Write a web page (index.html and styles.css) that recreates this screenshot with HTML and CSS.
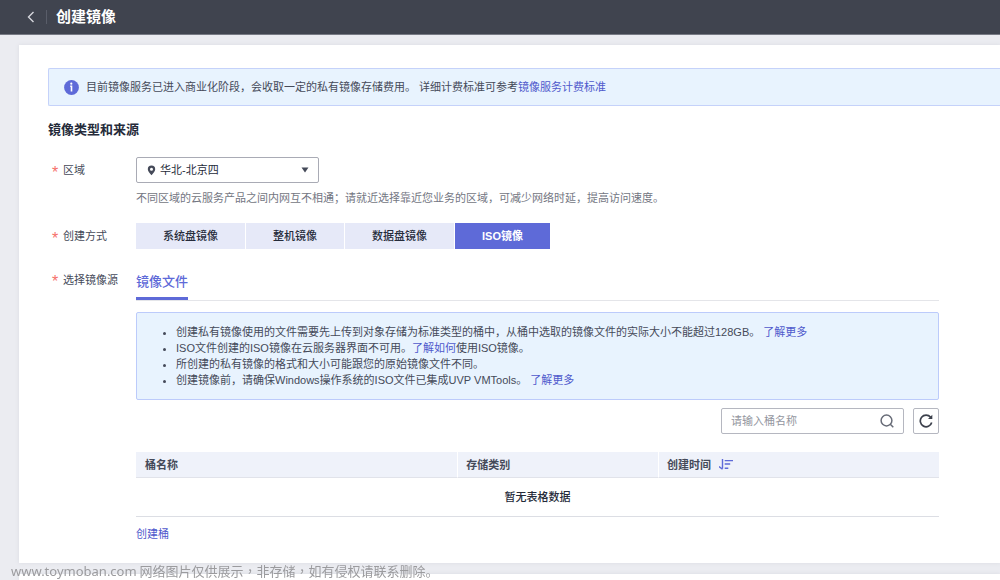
FILE: index.html
```
<!DOCTYPE html>
<html lang="zh-CN">
<head>
<meta charset="utf-8">
<meta name="viewport" content="width=device-width, initial-scale=1">
<title>创建镜像</title>
<link rel="stylesheet" href="styles.css">
</head>
<body>
<header class="topbar">
  <button class="back" type="button" aria-label="返回">
    <svg width="8" height="12" viewBox="0 0 8 12"><path d="M6.5 1 1.5 6l5 5" fill="none" stroke="currentColor" stroke-width="1.4"/></svg>
  </button>
  <h1 class="page-title">创建镜像</h1>
</header>

<main class="content">
  <section class="card">
    <div class="notice">
      <svg class="notice-icon" width="15" height="15" viewBox="0 0 15 15"><circle cx="7.5" cy="7.5" r="7.4" fill="#5e6ad8"/><circle cx="7.3" cy="3.7" r="1.1" fill="#fff"/><path d="M6.2 6.3h1.300v5.200" fill="none" stroke="#fff" stroke-width="1.6"/></svg>
      <p class="notice-text">目前镜像服务已进入商业化阶段，会收取一定的私有镜像存储费用。 详细计费标准可参考<a class="link" href="#pricing">镜像服务计费标准</a></p>
    </div>

    <h2 class="section-title">镜像类型和来源</h2>

    <form class="form">
      <div class="row">
        <label class="label" for="region"><span class="star">*</span>区域</label>
        <div class="field">
          <div class="select-box">
            <svg class="pin" width="9" height="11" viewBox="0 0 9 11"><path fill-rule="evenodd" d="M4.5 0.5a3.7 3.7 0 0 1 3.7 3.7c0 2.2-2 4.1-3.7 6.1C2.8 8.3 0.8 6.4 0.8 4.2A3.7 3.7 0 0 1 4.5 0.5Zm0 2.200a1.500 1.500 0 1 0 0 3 1.500 1.500 0 0 0 0-3Z" fill="#454a59"/></svg>
            <select class="select" id="region"><option>华北-北京四</option></select>
            <svg class="caret" width="8" height="6" viewBox="0 0 8 6"><path d="M.5.5h7L4 5.500Z" fill="#454a59"/></svg>
          </div>
          <p class="hint">不同区域的云服务产品之间内网互不相通；请就近选择靠近您业务的区域，可减少网络时延，提高访问速度。</p>
        </div>
      </div>

      <div class="row">
        <span class="label" id="mode"><span class="star">*</span>创建方式</span>
        <div class="segments" role="group" aria-labelledby="mode">
          <button class="segment" type="button">系统盘镜像</button>
          <button class="segment" type="button">整机镜像</button>
          <button class="segment" type="button">数据盘镜像</button>
          <button class="segment segment-active" type="button" aria-pressed="true">ISO镜像</button>
        </div>
      </div>

      <div class="row">
        <span class="label label-source"><span class="star">*</span>选择镜像源</span>
        <div class="field">
          <div class="tabs" role="tablist"><button class="tab" type="button" role="tab" aria-selected="true">镜像文件</button></div>
          <ul class="tips">
            <li>创建私有镜像使用的文件需要先上传到对象存储为标准类型的桶中，从桶中选取的镜像文件的实际大小不能超过128GB。 <a class="link" href="#bucket">了解更多</a></li>
            <li>ISO文件创建的ISO镜像在云服务器界面不可用。<a class="link" href="#iso">了解如何</a>使用ISO镜像。</li>
            <li>所创建的私有镜像的格式和大小可能跟您的原始镜像文件不同。</li>
            <li>创建镜像前，请确保Windows操作系统的ISO文件已集成UVP VMTools。 <a class="link" href="#tools">了解更多</a></li>
          </ul>
          <div class="toolbar">
            <div class="search">
              <input class="search-input" type="text" placeholder="请输入桶名称" aria-label="桶名称">
              <button class="search-button" type="button" aria-label="搜索"><svg width="14" height="14" viewBox="0 0 14 14"><g fill="none" stroke="#686c78" stroke-width="1.5"><circle cx="6.500" cy="6.500" r="5.400"/><path d="m10.300 10.300 3 3"/></g></svg></button>
            </div>
            <button class="refresh" type="button" aria-label="刷新"><svg width="14" height="14" viewBox="0 0 14 14"><path d="M11.600 3.300A5.800 5.800 0 1 0 12.700 8.500" fill="none" stroke="#3c404c" stroke-width="1.700"/><path d="M13.300.8v4.300H9Z" fill="#3c404c"/></svg></button>
          </div>
          <table class="table">
            <thead>
              <tr>
                <th class="col-name">桶名称</th>
                <th class="col-type">存储类别</th>
                <th><span class="sortable">创建时间<button class="sort" type="button" aria-label="排序"><svg width="14" height="11" viewBox="0 0 14 11"><path d="M3.500 0v9.500M0 7.600l3.500 2.600M5.700 1.600H14M5.700 5h5.500M5.700 9.300h3.600" fill="none" stroke="#5e6ad8" stroke-width="1.400"/></svg></button></span></th>
              </tr>
            </thead>
            <tbody><tr><td class="empty" colspan="3">暂无表格数据</td></tr></tbody>
          </table>
          <a class="link create" href="#create">创建桶</a>
        </div>
      </div>
    </form>
  </section>
  <section class="card card-next"></section>
</main>
<div class="watermark"><span class="watermark-site">www.toymoban.com</span> 网络图片仅供展示<span lang="zh-TW" class="watermark-mark">，</span>非存储<span lang="zh-TW" class="watermark-mark">，</span>如有侵权请联系删除。</div>
</body>
</html>
```
FILE: styles.css
```
* { box-sizing: border-box; }

body {
  margin: 0;
  min-height: 100vh;
  display: flex;
  flex-direction: column;
  background: #ebecf1;
  color: #454a59;
  font: 11px/16px "Liberation Sans", "Noto Sans CJK SC", sans-serif;
}

button, input, select { font: inherit; color: inherit; }
button { border: 0; padding: 0; background: none; cursor: pointer; }
svg { display: block; flex: none; }
h1, h2, p, ul { margin: 0; padding: 0; }

.link { color: #4f59cc; text-decoration: none; }

.topbar {
  display: flex;
  align-items: center;
  height: 35px;
  padding-left: 27px;
  background: #40444f;
  border-bottom: 1px solid #777a84;
  color: #fff;
}
.back {
  display: flex;
  align-items: center;
  height: 14px;
  padding-right: 11px;
  border-right: 1px solid #595d69;
  color: #d5d7dd;
}
.page-title { padding-left: 9px; font-size: 15px; line-height: 20px; }

.content {
  flex: 1;
  display: flex;
  flex-direction: column;
  gap: 11px;
  padding: 10px 0 0 19px;
}
.card {
  padding: 23px 0 21px 29px;
  background: #fff;
  box-shadow: 0 0 4px #d9dbe2;
}
.card-next { flex: 1; min-height: 6px; padding: 0; }

.notice {
  display: flex;
  align-items: center;
  gap: 7px;
  min-height: 38px;
  padding-left: 15px;
  background: #e8f3fe;
  border: 1px solid #c5d2fa;
  border-right: 0;
  border-radius: 2px 0 0 2px;
}

.section-title {
  margin-top: 14px;
  color: #252b3a;
  font-size: 13px;
  line-height: 20px;
}

.form {
  display: flex;
  flex-direction: column;
  gap: 17px;
  margin-top: 17px;
  padding-right: 61px;
}
.row { display: grid; grid-template-columns: 88px minmax(0, 1fr); }
.label { display: flex; padding-left: 4px; line-height: 26px; }
.star { width: 11px; height: 26px; color: #f66f6a; font-size: 16px; line-height: 32px; }

.select-box {
  display: grid;
  grid-template-columns: 19px 1fr 17px;
  align-items: center;
  width: 183px;
  height: 26px;
  border: 1px solid #a9abb5;
  border-radius: 2px;
}
.pin, .caret, .select { grid-row: 1; }
.pin { grid-column: 1; justify-self: end; }
.caret { grid-column: 3; pointer-events: none; }
.select {
  grid-column: 1 / -1;
  height: 24px;
  padding: 0 23px;
  border: 0;
  background: transparent;
  appearance: none;
  color: #252b3a;
}
.hint { margin-top: 7px; color: #737682; }

.segments { display: flex; flex-wrap: wrap; gap: 1px; }
.segment {
  height: 26px;
  padding: 0 27px;
  background: #e6e9f8;
  color: #252b3a;
  font-weight: 500;
}
.segment-active { background: #5e6ad8; color: #fff; font-weight: 700; }

.label-source { line-height: 28px; }
.tabs { display: flex; height: 35px; border-bottom: 1px solid #e4e5e9; }
.tab {
  height: 34px;
  border-bottom: 3px solid #5e6ad8;
  color: #5e6ad8;
  font-size: 13px;
  font-weight: 500;
}

.tips {
  margin-top: 11px;
  padding: 11px 12px 11px 39px;
  background: #e8f3fe;
  border: 1px solid #bccbfb;
  border-radius: 2px;
}

.toolbar { display: flex; justify-content: flex-end; gap: 9px; margin-top: 8px; }
.search {
  display: flex;
  align-items: center;
  width: 183px;
  height: 26px;
  padding: 0 9px;
  border: 1px solid #b5b7c0;
  border-radius: 2px;
}
.search-input { flex: 1; min-width: 0; border: 0; padding: 0; outline: 0; background: none; }
.search-input::placeholder { color: #9396a0; }
.refresh {
  display: grid;
  place-items: center;
  width: 26px;
  height: 26px;
  border: 1px solid #b5b7c0;
  border-radius: 2px;
}

.table {
  width: 100%;
  margin-top: 18px;
  border-collapse: separate;
  border-spacing: 0;
  table-layout: fixed;
}
.table th {
  height: 26px;
  padding: 0 9px;
  background: #eff2fa;
  border-bottom: 1px solid #e1e3ea;
  text-align: left;
  font-weight: 700;
  color: #454a59;
}
.table th + th { padding-left: 8px; border-left: 1px solid #fff; }
.col-name { width: 40%; }
.col-type { width: 25%; }
.sortable { display: flex; align-items: center; gap: 8px; }
.empty {
  height: 39px;
  padding: 0;
  border-bottom: 1px solid #dcdee4;
  text-align: center;
  font-weight: 500;
  color: #252b3a;
}
.create { display: block; width: max-content; margin-top: 9px; }

.watermark {
  position: fixed;
  left: 11px;
  bottom: 0;
  color: #9b9b9e;
  font: 13px/17px "Noto Sans CJK SC", sans-serif;
}
.watermark-site { font-family: "Noto Sans", sans-serif; }
.watermark-mark { font-family: "Noto Sans CJK TC", sans-serif; }
```
